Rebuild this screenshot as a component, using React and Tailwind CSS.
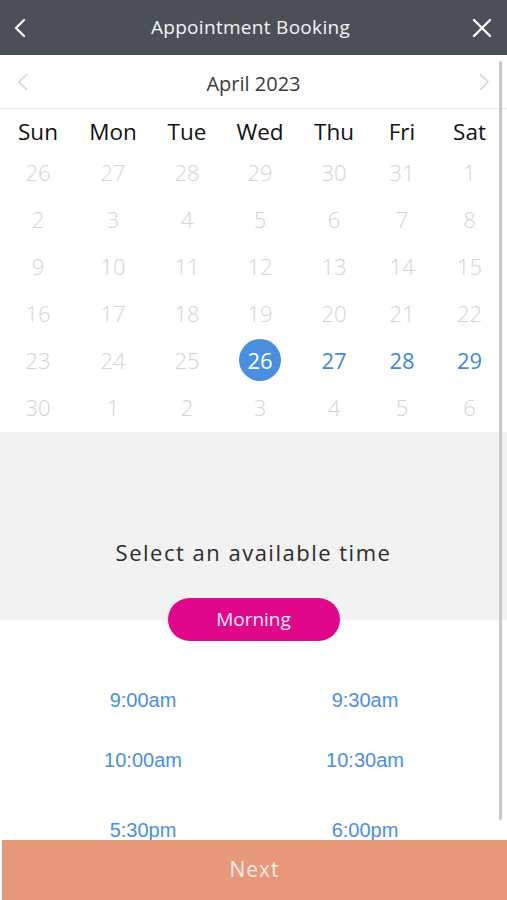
import React from "react";

const weeks = [
  [26, 27, 28, 29, 30, 31, 1],
  [2, 3, 4, 5, 6, 7, 8],
  [9, 10, 11, 12, 13, 14, 15],
  [16, 17, 18, 19, 20, 21, 22],
  [23, 24, 25, 26, 27, 28, 29],
  [30, 1, 2, 3, 4, 5, 6],
];
const days = ["Sun", "Mon", "Tue", "Wed", "Thu", "Fri", "Sat"];
const cols = "grid grid-cols-[76px_74px_74px_72px_76px_60px_1fr] shrink-0";

export default function App() {
  return (
    <div className="relative w-[507px] h-[900px] bg-white overflow-hidden flex flex-col font-['Open_Sans',sans-serif]">
      <div className="h-[55px] shrink-0 bg-[#4a5056] flex items-center justify-between px-[10px] text-white">
        <svg width="18" height="20" viewBox="0 0 18 20" className="ml-[2px]">
          <path d="M12 2 L4 10 L12 18" fill="none" stroke="white" strokeWidth="2.2" strokeLinecap="round" strokeLinejoin="round" />
        </svg>
        <div className="text-[19px] tracking-[0.3px] text-[#f4f4f4]">Appointment Booking</div>
        <svg width="22" height="22" viewBox="0 0 22 22" className="mr-[4px]">
          <path d="M3 3 L19 19 M19 3 L3 19" fill="none" stroke="white" strokeWidth="2.4" strokeLinecap="round" />
        </svg>
      </div>

      <div className="flex-1 min-h-0 overflow-hidden flex flex-col">
        <div className="h-[54px] shrink-0 border-b border-[#ececec] flex items-center justify-between px-[16px]">
          <svg width="14" height="22" viewBox="0 0 14 22">
            <path d="M11 3 L3 11 L11 19" fill="none" stroke="#d6d6d6" strokeWidth="1.6" />
          </svg>
          <div className="text-[20px] text-[#3c3c3c] pt-[4px]">April 2023</div>
          <svg width="14" height="22" viewBox="0 0 14 22">
            <path d="M3 3 L11 11 L3 19" fill="none" stroke="#d6d6d6" strokeWidth="1.6" />
          </svg>
        </div>

        <div className={`${cols} h-[39px] items-center text-[22.5px] text-[#111] leading-none`}>
          {days.map((d) => (
            <div key={d} className="text-center pt-[7px]">{d}</div>
          ))}
        </div>

        {weeks.map((w, wi) => (
          <div key={wi} className={`${cols} h-[47px] items-center text-[22px] font-light leading-none`}>
            {w.map((n, i) => {
              const sel = wi === 4 && i === 3;
              const avail = wi === 4 && i > 3;
              return (
                <div key={i} className="flex justify-center">
                  {sel ? (
                    <div className="w-[42px] h-[42px] rounded-full bg-[#4a8fdf] text-white flex items-center justify-center font-normal">
                      {n}
                    </div>
                  ) : (
                    <span className={avail ? "text-[#3f87da] font-normal" : "text-[#d4d4d4]"}>{n}</span>
                  )}
                </div>
              );
            })}
          </div>
        ))}

        <div className="h-[2px] shrink-0" />

        <div className="h-[188px] shrink-0 bg-[#f2f2f2] flex flex-col justify-end items-center pb-[53px]">
          <div className="text-[22px] leading-[30px] tracking-[1.5px] text-[#2c2c2c]">Select an available time</div>
        </div>

        <div className="flex justify-center -mt-[22px] shrink-0">
          <div className="w-[172px] h-[43px] rounded-full bg-[#e0078a] text-[#fde7f3] text-[19px] flex items-center justify-center">
            Morning
          </div>
        </div>

        <div className="grid grid-cols-2 shrink-0 px-[32px] w-[508px] font-['Liberation_Sans',Arial,sans-serif] text-[20px] text-[#4a8fdf] mt-[39px]">
          <div className="h-[40px] flex items-center justify-center">9:00am</div>
          <div className="h-[40px] flex items-center justify-center">9:30am</div>
          <div className="h-[40px] mt-[20px] flex items-center justify-center">10:00am</div>
          <div className="h-[40px] mt-[20px] flex items-center justify-center">10:30am</div>
          <div className="h-[40px] mt-[30px] flex items-center justify-center">5:30pm</div>
          <div className="h-[40px] mt-[30px] flex items-center justify-center">6:00pm</div>
        </div>
      </div>

      <div className="h-[60px] shrink-0 ml-[2px] bg-[#e8987a] flex items-center justify-center text-[21px] tracking-[1px] text-[#fbece6]">
        Next
      </div>

      <div className="absolute left-[499px] top-[61px] w-[3px] h-[759px] bg-[#c8c8c8] rounded-full" />
    </div>
  );
}
